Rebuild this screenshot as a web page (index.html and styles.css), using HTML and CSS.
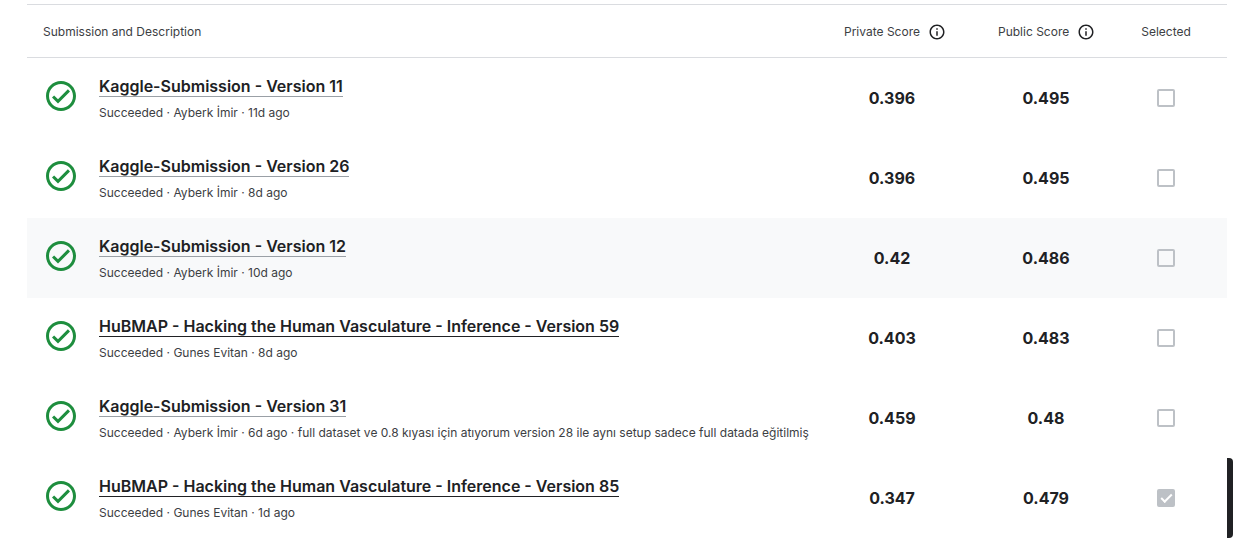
FILE: index.html
```html
<!DOCTYPE html>
<html lang="en">
<head>
    <meta charset="UTF-8">
    <meta name="viewport" content="width=device-width, initial-scale=1.0">
    <title>Submissions</title>
    <link rel="stylesheet" href="styles.css">
</head>
<body>

<!-- Shared icons -->
<svg class="icon-defs" aria-hidden="true">
    <symbol id="icon-check" viewBox="0 0 24 24">
        <path d="M12 2C6.48 2 2 6.48 2 12s4.48 10 10 10 10-4.48 10-10S17.52 2 12 2zm0 18c-4.41 0-8-3.59-8-8s3.59-8 8-8 8 3.59 8 8-3.59 8-8 8zm4.59-12.42L10 14.17l-2.59-2.58L6 13l4 4 8-8z"/>
    </symbol>
    <symbol id="icon-info" viewBox="0 0 24 24">
        <path d="M11 7h2v2h-2zm0 4h2v6h-2zm1-9C6.48 2 2 6.48 2 12s4.48 10 10 10 10-4.48 10-10S17.52 2 12 2zm0 18c-4.41 0-8-3.59-8-8s3.59-8 8-8 8 3.59 8 8-3.59 8-8 8z"/>
    </symbol>
</svg>

<table class="submissions">
    <thead>
        <tr>
            <th class="col-description">Submission and Description</th>
            <th class="col-score"><span class="score-label">Private Score <svg class="info-icon"><use href="#icon-info"/></svg></span></th>
            <th class="col-score"><span class="score-label">Public Score <svg class="info-icon"><use href="#icon-info"/></svg></span></th>
            <th class="col-selected">Selected</th>
        </tr>
    </thead>
    <tbody>
        <tr>
            <td class="description">
                <div class="submission">
                    <svg class="status-icon"><use href="#icon-check"/></svg>
                    <div class="details">
                        <a class="title" href="#">Kaggle-Submission - Version 11</a>
                        <p class="meta">Succeeded · Ayberk İmir · 11d ago</p>
                    </div>
                </div>
            </td>
            <td class="score">0.396</td>
            <td class="score">0.495</td>
            <td class="selected"><input type="checkbox" aria-label="Select Version 11"></td>
        </tr>
        <tr>
            <td class="description">
                <div class="submission">
                    <svg class="status-icon"><use href="#icon-check"/></svg>
                    <div class="details">
                        <a class="title" href="#">Kaggle-Submission - Version 26</a>
                        <p class="meta">Succeeded · Ayberk İmir · 8d ago</p>
                    </div>
                </div>
            </td>
            <td class="score">0.396</td>
            <td class="score">0.495</td>
            <td class="selected"><input type="checkbox" aria-label="Select Version 26"></td>
        </tr>
        <tr class="active">
            <td class="description">
                <div class="submission">
                    <svg class="status-icon"><use href="#icon-check"/></svg>
                    <div class="details">
                        <a class="title" href="#">Kaggle-Submission - Version 12</a>
                        <p class="meta">Succeeded · Ayberk İmir · 10d ago</p>
                    </div>
                </div>
            </td>
            <td class="score">0.42</td>
            <td class="score">0.486</td>
            <td class="selected"><input type="checkbox" aria-label="Select Version 12"></td>
        </tr>
        <tr>
            <td class="description">
                <div class="submission">
                    <svg class="status-icon"><use href="#icon-check"/></svg>
                    <div class="details">
                        <a class="title title-dark" href="#">HuBMAP - Hacking the Human Vasculature - Inference - Version 59</a>
                        <p class="meta">Succeeded · Gunes Evitan · 8d ago</p>
                    </div>
                </div>
            </td>
            <td class="score">0.403</td>
            <td class="score">0.483</td>
            <td class="selected"><input type="checkbox" aria-label="Select Version 59"></td>
        </tr>
        <tr>
            <td class="description">
                <div class="submission">
                    <svg class="status-icon"><use href="#icon-check"/></svg>
                    <div class="details">
                        <a class="title" href="#">Kaggle-Submission - Version 31</a>
                        <p class="meta">Succeeded · Ayberk İmir · 6d ago · full dataset ve 0.8 kıyası için atıyorum version 28 ile aynı setup sadece full datada eğitilmiş</p>
                    </div>
                </div>
            </td>
            <td class="score">0.459</td>
            <td class="score">0.48</td>
            <td class="selected"><input type="checkbox" aria-label="Select Version 31"></td>
        </tr>
        <tr>
            <td class="description">
                <div class="submission">
                    <svg class="status-icon"><use href="#icon-check"/></svg>
                    <div class="details">
                        <a class="title title-dark" href="#">HuBMAP - Hacking the Human Vasculature - Inference - Version 85</a>
                        <p class="meta">Succeeded · Gunes Evitan · 1d ago</p>
                    </div>
                </div>
            </td>
            <td class="score">0.347</td>
            <td class="score">0.479</td>
            <td class="selected chosen"><input type="checkbox" aria-label="Select Version 85" checked></td>
        </tr>
    </tbody>
</table>

</body>
</html>
```
FILE: styles.css
```css
body {
    margin: 0;
    padding: 4px 23px 0 27px;
    background-color: #fff;
    color: #202124;
    font-family: Inter, "Liberation Sans", sans-serif;
}
.icon-defs {
    display: none;
}
.submissions {
    width: 100%;
    table-layout: fixed;
    border-collapse: separate;
    border-spacing: 0;
}

/* Header */
.submissions th {
    height: 50px;
    padding: 2px 0 0;
    border-top: 1px solid #dadce0;
    border-bottom: 1px solid #dadce0;
    color: #3c4043;
    font-size: 12px;
    font-weight: 400;
    line-height: 20px;
    text-align: left;
    white-space: nowrap;
}
.submissions .col-description {
    padding-left: 16px;
}
.submissions .col-score {
    width: 125px;
    padding-left: 29px;
}
.submissions .col-selected {
    width: 86px;
    padding-right: 18px;
    text-align: center;
}
.score-label {
    display: flex;
    align-items: center;
    gap: 8px;
}
.info-icon {
    width: 18px;
    height: 18px;
    fill: #202124;
}

/* Rows */
.submissions td {
    height: 80px;
    padding: 0;
}
.submissions .description {
    vertical-align: top;
}
.active {
    background-color: #f8f9fa;
}
.submission {
    display: flex;
    align-items: flex-start;
    gap: 20px;
    padding: 18px 0 0 16px;
}
.status-icon {
    flex: none;
    width: 36px;
    height: 36px;
    margin-top: 2px;
    fill: #1e8e3e;
}
.title {
    display: inline-block;
    border-bottom: 1px solid #9aa0a6;
    color: #202124;
    font-size: 16px;
    font-weight: 600;
    line-height: 20px;
    text-decoration: none;
}
.title-dark {
    border-bottom-color: #202124;
}
.meta {
    margin: 6px 0 0;
    color: #3c4043;
    font-size: 12px;
    line-height: 20px;
}
.submissions .score {
    font-size: 16px;
    font-weight: 700;
    text-align: center;
}
.submissions .selected {
    padding-right: 18px;
    text-align: center;
}
.selected input {
    appearance: none;
    display: block;
    box-sizing: border-box;
    width: 18px;
    height: 18px;
    margin: 0 auto;
    border: 2px solid #bdc1c6;
    border-radius: 2px;
}
.selected input:checked {
    background-color: #bdc1c6;
}
.selected input:checked::before {
    content: "";
    display: block;
    box-sizing: border-box;
    width: 11px;
    height: 6px;
    margin: 3px 2px;
    border-left: 2px solid #fff;
    border-bottom: 2px solid #fff;
    transform: rotate(-45deg);
}

/* Dark marker on the right edge of the chosen row */
.chosen {
    position: relative;
}
.chosen::after {
    content: "";
    position: absolute;
    top: 0;
    left: 100%;
    width: 6px;
    height: 100%;
    border-radius: 0 4px 4px 0;
    background-color: #202124;
}
```
